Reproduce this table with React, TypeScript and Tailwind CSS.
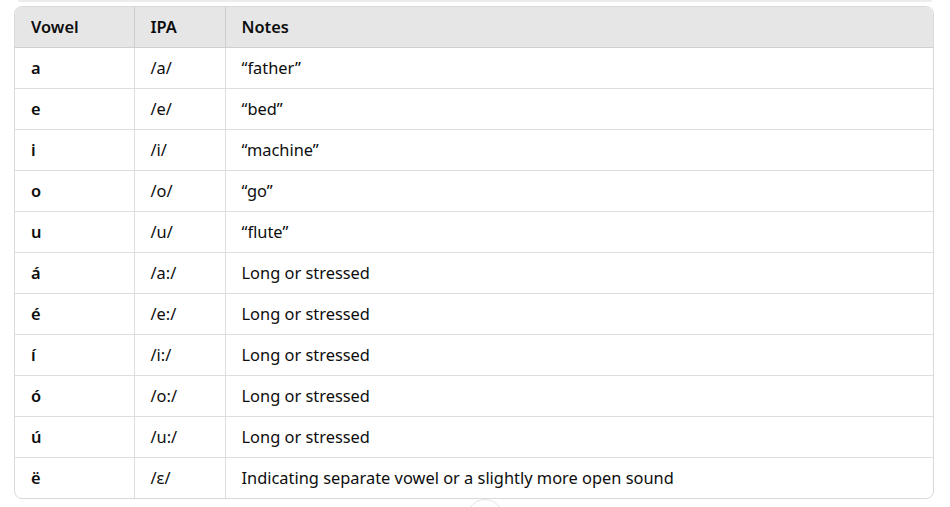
const rows: [string, string, string][] = [
  ['a', '/a/', '\u201Cfather\u201D'],
  ['e', '/e/', '\u201Cbed\u201D'],
  ['i', '/i/', '\u201Cmachine\u201D'],
  ['o', '/o/', '\u201Cgo\u201D'],
  ['u', '/u/', '\u201Cflute\u201D'],
  ['á', '/a:/', 'Long or stressed'],
  ['é', '/e:/', 'Long or stressed'],
  ['í', '/i:/', 'Long or stressed'],
  ['ó', '/o:/', 'Long or stressed'],
  ['ú', '/u:/', 'Long or stressed'],
  ['ë', '/ɛ/', 'Indicating separate vowel or a slightly more open sound'],
]

export default function App() {
  return (
    <div className="relative h-[507px] w-[950px] overflow-hidden bg-white font-['Noto_Sans',sans-serif] text-[16.4px] text-[#0d0d0d]">
      <div className="ml-[18px] mr-[18px] h-[2px] rounded-b bg-[#ececec]" />
      <div className="ml-[14px] mt-[4px] w-[920px] overflow-hidden rounded-[8px] border border-[#d9d9d9]">
        <table className="w-full border-collapse">
          <thead>
            <tr className="h-[40px] bg-[#e6e6e6] text-left">
              <th className="w-[119px] border-b border-[#cfcfcf] pl-[16px] pt-[2px] font-semibold">Vowel</th>
              <th className="w-[91px] border-b border-l border-[#cfcfcf] pl-[16px] pt-[2px] font-semibold">IPA</th>
              <th className="border-b border-l border-[#cfcfcf] pl-[16px] pt-[2px] font-semibold">Notes</th>
            </tr>
          </thead>
          <tbody>
            {rows.map(([v, ipa, note], i) => (
              <tr key={v} className="h-[41px]">
                <td className={`pl-[16px] pt-[2px] font-semibold ${i < rows.length - 1 ? 'border-b border-[#dedede]' : ''}`}>{v}</td>
                <td className={`border-l border-[#dedede] pl-[16px] pt-[2px] ${i < rows.length - 1 ? 'border-b' : ''}`}>{ipa}</td>
                <td className={`border-l border-[#dedede] pl-[16px] pt-[2px] ${i < rows.length - 1 ? 'border-b' : ''}`}>{note}</td>
              </tr>
            ))}
          </tbody>
        </table>
      </div>
      <div className="absolute left-[467px] top-[499px] h-[36px] w-[36px] rounded-full border border-[#e3e3e3] bg-white" />
    </div>
  )
}
